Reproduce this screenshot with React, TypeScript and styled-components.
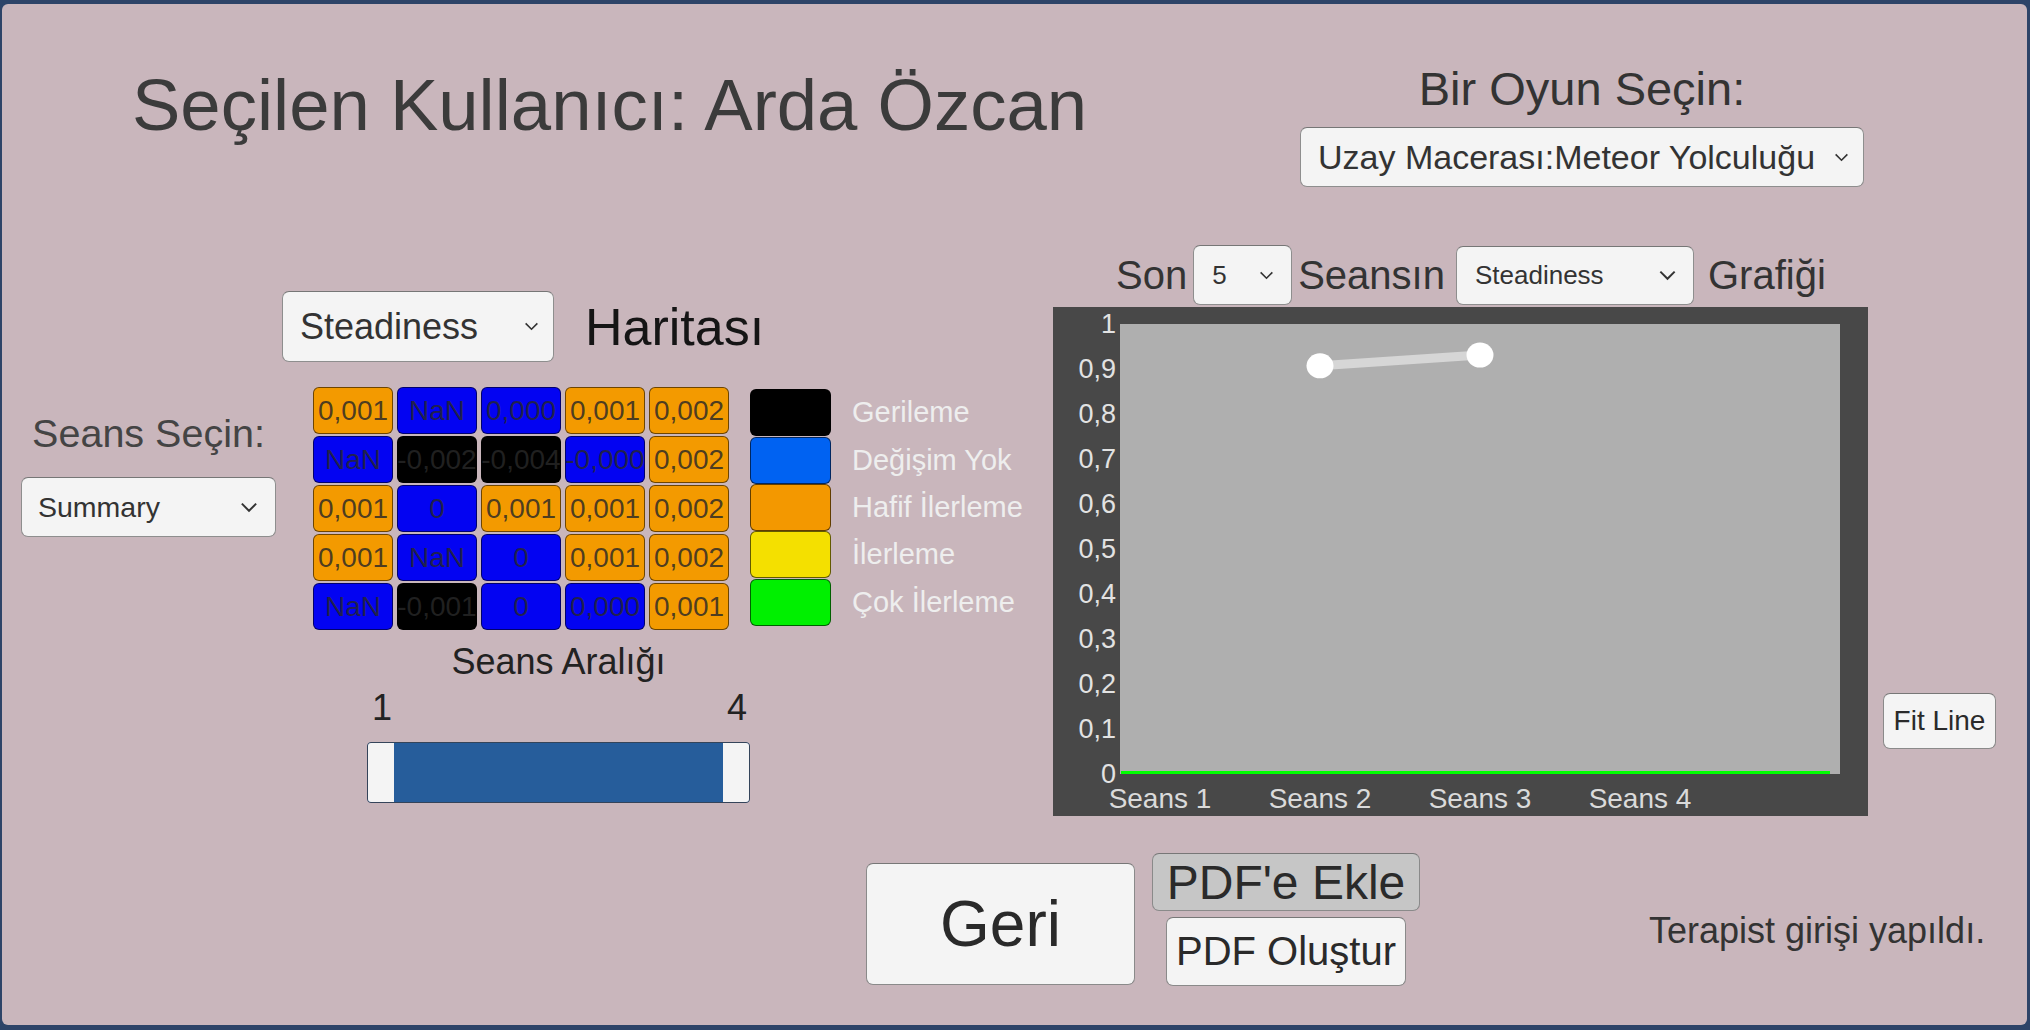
import React from 'react';
import styled, { createGlobalStyle } from 'styled-components';

const GlobalStyle = createGlobalStyle`
    html, body {
        margin: 0;
        padding: 0;
        background: #2d4468;
    }
    body {
        font-family: "Liberation Sans", Arial, sans-serif;
    }
    * {
        box-sizing: border-box;
    }
`;

const Screen = styled.div`
    width: 2030px;
    height: 1030px;
    padding: 4px 3px 5px 2px;
    background: #2d4468;
    overflow: hidden;
`;

const Panel = styled.div`
    height: 100%;
    background: #c9b6bc;
    border-radius: 6px;
    display: flex;
    flex-direction: column;
`;

/* header */

const Header = styled.header`
    display: flex;
    align-items: flex-start;
    justify-content: space-between;
    height: 183px;
    padding: 59px 163px 0 130px;
`;

const Title = styled.h1`
    margin: 0;
    font-size: 72.5px;
    font-weight: normal;
    line-height: 83px;
    color: #3b3b3b;
    white-space: nowrap;
`;

const GamePicker = styled.div`
    display: flex;
    flex-direction: column;
    align-items: center;
    gap: 12px;
`;

const PickerLabel = styled.div`
    font-size: 47px;
    line-height: 52px;
    color: #333;
`;

/* select */

const SelectBox = styled.div<{ $w: number; $h: number; $fs: number; $pl: number; $pr: number }>`
    width: ${p => p.$w}px;
    height: ${p => p.$h}px;
    flex-shrink: 0;
    display: flex;
    align-items: center;
    justify-content: space-between;
    padding: 0 ${p => p.$pr}px 0 ${p => p.$pl}px;
    background: #f4f4f4;
    border: 1px solid #8e8e8e;
    border-top-color: #767676;
    border-radius: 7px;
    font-size: ${p => p.$fs}px;
    color: #333;
    white-space: nowrap;
`;

const Chevron: React.FC<{ w: number }> = ({ w }) => (
    <svg width={w} height={Math.round(w * 0.6)} viewBox="0 0 16 10">
        <polyline points="1.5,1.5 8,8 14.5,1.5" fill="none" stroke="#333" strokeWidth="1.8" />
    </svg>
);

const Select: React.FC<{
    value: string;
    w: number;
    h: number;
    fs: number;
    pl?: number;
    pr?: number;
    chevron?: number;
    className?: string;
}> = ({ value, w, h, fs, pl = 18, pr = 16, chevron = 16, className }) => (
    <SelectBox className={className} $w={w} $h={h} $fs={fs} $pl={pl} $pr={pr}>
        <span>{value}</span>
        <Chevron w={chevron} />
    </SelectBox>
);

/* body */

const Body = styled.div`
    display: flex;
    align-items: flex-start;
    height: 629px;
    padding-left: 19px;
`;

const LeftColumn = styled.div`
    width: 255px;
    margin-top: 224px;
    display: flex;
    flex-direction: column;
    align-items: center;
    gap: 22px;
`;

const SessionLabel = styled.div`
    font-size: 39.5px;
    line-height: 44px;
    color: #444;
    white-space: nowrap;
`;

const HeatSection = styled.section`
    width: 765px;
    margin: 104px 0 0 6px;
    display: flex;
    flex-direction: column;
`;

const MapHeader = styled.div`
    display: flex;
    align-items: center;
    gap: 31px;
`;

const MapTitle = styled.div`
    font-size: 52px;
    line-height: 56px;
    color: #151515;
`;

const HeatRow = styled.div`
    display: flex;
    align-items: flex-start;
    gap: 21px;
    margin: 25px 0 0 31px;
`;

const HeatGrid = styled.div`
    display: grid;
    grid-template-columns: repeat(5, 80px);
    grid-auto-rows: 47px;
    column-gap: 4px;
    row-gap: 2px;
`;

const cellColors = {
    o: '#f39a00',
    b: '#0303f2',
    k: '#000000',
};

type CellKind = keyof typeof cellColors;

const Cell = styled.div<{ $kind: CellKind }>`
    background: ${p => cellColors[p.$kind]};
    border: 1px solid rgba(0, 0, 0, 0.55);
    border-radius: 6px;
    display: flex;
    align-items: center;
    justify-content: center;
    font-size: 28px;
    color: rgba(40, 40, 40, 0.82);
    white-space: nowrap;
    overflow: visible;
`;

const Legend = styled.div`
    margin-top: 2px;
    display: flex;
    flex-direction: column;
`;

const LegendRow = styled.div`
    display: flex;
    align-items: center;
    height: 47.4px;
`;

const Swatch = styled.div<{ $color: string }>`
    width: 81px;
    height: 47px;
    background: ${p => p.$color};
    border: 1px solid rgba(0, 0, 0, 0.6);
    border-radius: 6px;
`;

const LegendLabel = styled.span`
    margin-left: 21px;
    font-size: 29px;
    color: #eeeeee;
    white-space: nowrap;
`;

const RangeBlock = styled.div`
    width: 383px;
    margin: 12px 0 0 85px;
    display: flex;
    flex-direction: column;
`;

const RangeLabel = styled.div`
    text-align: center;
    font-size: 36px;
    line-height: 39px;
    color: #222;
`;

const RangeEnds = styled.div`
    display: flex;
    justify-content: space-between;
    margin-top: 7px;
    padding: 0 3px 0 5px;
    font-size: 36px;
    line-height: 39px;
    color: #222;
`;

const Track = styled.div`
    margin-top: 15px;
    height: 61px;
    display: flex;
    background: #265d9b;
    border: 1px solid #34445a;
    border-radius: 4px;
    overflow: hidden;
`;

const Handle = styled.div`
    width: 26px;
    background: #f4f4f4;
`;

const Fill = styled.div`
    flex: 1;
`;

/* chart */

const ChartSection = styled.section`
    width: 815px;
    margin: 58px 0 0 6px;
    display: flex;
    flex-direction: column;
`;

const ChartHead = styled.div`
    height: 60px;
    display: flex;
    align-items: center;
    gap: 6px;
    padding-left: 63px;
`;

const HeadText = styled.span`
    font-size: 40px;
    line-height: 46px;
    color: #333;
`;

const MetricSelect = styled(Select)`
    margin: 0 8px 0 5px;
`;

const ChartBox = styled.div`
    margin-top: 2px;
    height: 509px;
    display: flex;
    padding: 17px 28px 0 0;
    background: #484848;
`;

const YAxis = styled.div`
    width: 67px;
    height: 472px;
    margin-top: -11px;
    padding-right: 4px;
    display: flex;
    flex-direction: column;
    justify-content: space-between;
    align-items: flex-end;
    font-size: 27px;
    line-height: 22px;
    color: #e2e2e2;
`;

const PlotColumn = styled.div`
    width: 720px;
    display: flex;
    flex-direction: column;
`;

const Plot = styled.div`
    height: 450px;
    background: #afafaf;

    svg {
        display: block;
    }
`;

const XAxis = styled.div`
    display: flex;
    height: 42px;
    margin-left: -40px;
    padding-top: 8px;
    align-items: center;
`;

const XLabel = styled.span`
    width: 160px;
    text-align: center;
    font-size: 28px;
    line-height: 28px;
    color: #dadada;
`;

/* buttons */

const Button = styled.div<{ $w: number; $h: number; $fs: number; $bg?: string }>`
    width: ${p => p.$w}px;
    height: ${p => p.$h}px;
    display: flex;
    align-items: center;
    justify-content: center;
    background: ${p => p.$bg ?? '#f4f4f4'};
    border: 1px solid #8a8a8a;
    border-top-color: #777;
    border-radius: 7px;
    font-size: ${p => p.$fs}px;
    color: #2a2a2a;
    white-space: nowrap;
`;

const FitButton = styled(Button)`
    margin: 506px 0 0 15px;
`;

const Footer = styled.footer`
    display: flex;
    align-items: flex-start;
    margin-top: 37px;
    padding-left: 864px;
`;

const BackButton = styled(Button)`
    margin-top: 10px;
`;

const PdfColumn = styled.div`
    margin-left: 17px;
    display: flex;
    flex-direction: column;
    align-items: center;
    gap: 6px;
`;

const Status = styled.div`
    margin: 57px 0 0 229px;
    font-size: 36px;
    line-height: 41px;
    color: #333;
    white-space: nowrap;
`;

const heatmap: [string, CellKind][][] = [
    [['0,001', 'o'], ['NaN', 'b'], ['0,000', 'b'], ['0,001', 'o'], ['0,002', 'o']],
    [['NaN', 'b'], ['-0,002', 'k'], ['-0,004', 'k'], ['-0,000', 'b'], ['0,002', 'o']],
    [['0,001', 'o'], ['0', 'b'], ['0,001', 'o'], ['0,001', 'o'], ['0,002', 'o']],
    [['0,001', 'o'], ['NaN', 'b'], ['0', 'b'], ['0,001', 'o'], ['0,002', 'o']],
    [['NaN', 'b'], ['-0,001', 'k'], ['0', 'b'], ['0,000', 'b'], ['0,001', 'o']],
];

const legend = [
    { color: '#000000', label: 'Gerileme' },
    { color: '#0062f2', label: 'Değişim Yok' },
    { color: '#f39800', label: 'Hafif İlerleme' },
    { color: '#f4e000', label: 'İlerleme' },
    { color: '#00f000', label: 'Çok İlerleme' },
];

const yTicks = ['1', '0,9', '0,8', '0,7', '0,6', '0,5', '0,4', '0,3', '0,2', '0,1', '0'];
const sessions = ['Seans 1', 'Seans 2', 'Seans 3', 'Seans 4'];

// plot is 720 x 450, sessions are 160px apart starting at 40
const points = [
    { x: 200, v: 0.907 },
    { x: 360, v: 0.931 },
];
const toY = (v: number) => (1 - v) * 450;

const App: React.FC = () => (
    <>
        <GlobalStyle />
        <Screen>
            <Panel>
                <Header>
                    <Title>Seçilen Kullanıcı: Arda Özcan</Title>
                    <GamePicker>
                        <PickerLabel>Bir Oyun Seçin:</PickerLabel>
                        <Select value="Uzay Macerası:Meteor Yolculuğu" w={564} h={60} fs={34} pl={17} pr={14} chevron={15} />
                    </GamePicker>
                </Header>

                <Body>
                    <LeftColumn>
                        <SessionLabel>Seans Seçin:</SessionLabel>
                        <Select value="Summary" w={255} h={60} fs={28.5} pl={16} pr={17} chevron={18} />
                    </LeftColumn>

                    <HeatSection>
                        <MapHeader>
                            <Select value="Steadiness" w={272} h={71} fs={36} pl={17} pr={14} chevron={15} />
                            <MapTitle>Haritası</MapTitle>
                        </MapHeader>
                        <HeatRow>
                            <HeatGrid>
                                {heatmap.flat().map(([text, kind], i) => (
                                    <Cell key={i} $kind={kind}>
                                        {text}
                                    </Cell>
                                ))}
                            </HeatGrid>
                            <Legend>
                                {legend.map(item => (
                                    <LegendRow key={item.label}>
                                        <Swatch $color={item.color} />
                                        <LegendLabel>{item.label}</LegendLabel>
                                    </LegendRow>
                                ))}
                            </Legend>
                        </HeatRow>
                        <RangeBlock>
                            <RangeLabel>Seans Aralığı</RangeLabel>
                            <RangeEnds>
                                <span>1</span>
                                <span>4</span>
                            </RangeEnds>
                            <Track>
                                <Handle />
                                <Fill />
                                <Handle />
                            </Track>
                        </RangeBlock>
                    </HeatSection>

                    <ChartSection>
                        <ChartHead>
                            <HeadText>Son</HeadText>
                            <Select value="5" w={99} h={60} fs={26} pl={18} pr={17} chevron={15} />
                            <HeadText>Seansın</HeadText>
                            <MetricSelect value="Steadiness" w={238} h={59} fs={26} pl={18} pr={16} chevron={19} />
                            <HeadText>Grafiği</HeadText>
                        </ChartHead>
                        <ChartBox>
                            <YAxis>
                                {yTicks.map(t => (
                                    <span key={t}>{t}</span>
                                ))}
                            </YAxis>
                            <PlotColumn>
                                <Plot>
                                    <svg width={720} height={450} viewBox="0 0 720 450">
                                        <line x1={1} y1={448.5} x2={710} y2={448.5} stroke="#00ff00" strokeWidth={3} />
                                        <line
                                            x1={points[0].x}
                                            y1={toY(points[0].v)}
                                            x2={points[1].x}
                                            y2={toY(points[1].v)}
                                            stroke="#d6d6d6"
                                            strokeWidth={9}
                                        />
                                        {points.map(p => (
                                            <ellipse key={p.x} cx={p.x} cy={toY(p.v)} rx={13.5} ry={12.5} fill="#ffffff" />
                                        ))}
                                    </svg>
                                </Plot>
                                <XAxis>
                                    {sessions.map(s => (
                                        <XLabel key={s}>{s}</XLabel>
                                    ))}
                                </XAxis>
                            </PlotColumn>
                        </ChartBox>
                    </ChartSection>

                    <FitButton $w={113} $h={56} $fs={28}>
                        Fit Line
                    </FitButton>
                </Body>

                <Footer>
                    <BackButton $w={269} $h={122} $fs={64}>
                        Geri
                    </BackButton>
                    <PdfColumn>
                        <Button $w={268} $h={58} $fs={48} $bg="#c6c6c6">
                            PDF'e Ekle
                        </Button>
                        <Button $w={240} $h={69} $fs={40}>
                            PDF Oluştur
                        </Button>
                    </PdfColumn>
                    <Status>Terapist girişi yapıldı.</Status>
                </Footer>
            </Panel>
        </Screen>
    </>
);

export default App;
